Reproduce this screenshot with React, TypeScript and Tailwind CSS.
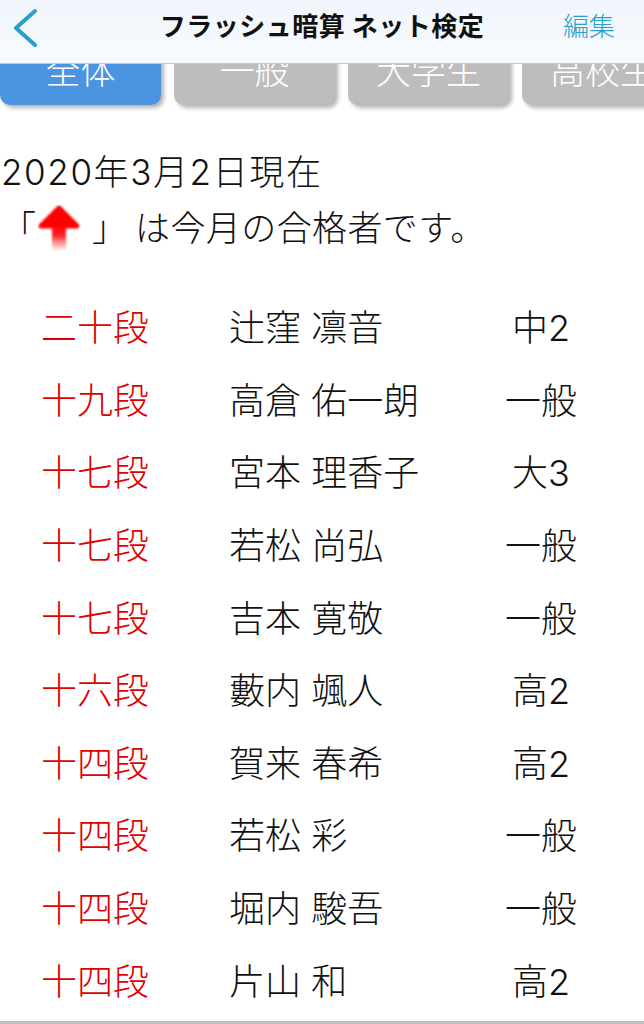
import React from 'react';

const ranks = [
    { rank: '二十段', name: '辻窪 凛音', grade: '中2' },
    { rank: '十九段', name: '高倉 佑一朗', grade: '一般' },
    { rank: '十七段', name: '宮本 理香子', grade: '大3' },
    { rank: '十七段', name: '若松 尚弘', grade: '一般' },
    { rank: '十七段', name: '吉本 寛敬', grade: '一般' },
    { rank: '十六段', name: '藪内 颯人', grade: '高2' },
    { rank: '十四段', name: '賀来 春希', grade: '高2' },
    { rank: '十四段', name: '若松 彩', grade: '一般' },
    { rank: '十四段', name: '堀内 駿吾', grade: '一般' },
    { rank: '十四段', name: '片山 和', grade: '高2' },
];

const tabs = ['全体', '一般', '大学生', '高校生'];

function UpArrow() {
    return (
        <svg width="44" height="46" viewBox="0 0 44 46" className="shrink-0 ml-[1px] mr-[11px]">
            <defs>
                <linearGradient id="shaft" x1="0" y1="0" x2="0" y2="1">
                    <stop offset="0" stopColor="#ff0000" />
                    <stop offset="0.45" stopColor="#ff2a2a" />
                    <stop offset="1" stopColor="#ff6060" stopOpacity="0.12" />
                </linearGradient>
                <filter id="soft" x="-20%" y="-20%" width="140%" height="140%">
                    <feGaussianBlur stdDeviation="0.9" />
                </filter>
            </defs>
            <g filter="url(#soft)">
                <path d="M22 3 L40 21 L4 21 Z" fill="#ff0000" stroke="#ff0000" strokeWidth="5" strokeLinejoin="round" />
                <rect x="15" y="20" width="14" height="25" fill="url(#shaft)" />
            </g>
        </svg>
    );
}

export default function App() {
    return (
        <div className="w-[644px] h-[1024px] overflow-hidden bg-white text-[#111] font-light" style={{ fontFamily: 'Inter, "Noto Sans CJK JP", "Noto Sans", sans-serif' }}>
            {/* header */}
            <div className="relative z-10 h-[64px] grid grid-cols-[1fr_auto_1fr] items-center pb-[10px] bg-gradient-to-b from-[#f1f6fc] to-[#f7fafd] border-b border-[#c5c9cd]">
                <div className="pl-[11px] flex items-center">
                    <svg width="28" height="40" viewBox="0 0 28 40">
                        <path d="M24 4 L5 21 L24 38" fill="none" stroke="#2a9fcb" strokeWidth="4" strokeLinecap="round" strokeLinejoin="round" />
                    </svg>
                </div>
                <div className="text-[26px] font-bold tracking-[0.5px] leading-none">フラッシュ暗算 ネット検定</div>
                <div className="text-right pr-[29px] text-[26px] text-[#2a9fcb] leading-none">編集</div>
            </div>

            {/* tabs */}
            <div className="h-[52px] overflow-hidden">
                <div className="flex gap-[13px] -mt-[27px]">
                    {tabs.map((t, i) => (
                        <div
                            key={t}
                            className={`shrink-0 w-[161px] h-[68px] rounded-[10px] flex items-center justify-center text-[35px] leading-none text-white shadow-[3px_3px_4px_rgba(0,0,0,0.3)] ${i === 0 ? 'bg-[#4a94e0]' : 'bg-[#bdbdbd]'}`}
                        >
                            {t}
                        </div>
                    ))}
                </div>
            </div>

            {/* notice */}
            <div className="mt-[28px] pl-[1px] text-[35px] leading-[56px]">
                <div className="tracking-[1.6px]">2020年3月2日現在</div>
                <div className="flex items-center h-[56px]">
                    <span>「</span>
                    <UpArrow />
                    <span>」</span>
                    <span className="ml-[8px] tracking-[0.4px]">は今月の合格者です。</span>
                </div>
            </div>

            {/* list */}
            <div className="mt-[36px]">
                {ranks.map((r, i) => (
                    <div key={i} className="h-[72.6px] flex items-center pl-[41px] pr-[32px] text-[36px] leading-none">
                        <div className="w-[188px] text-[#e00000]">{r.rank}</div>
                        <div className="flex-1">{r.name}</div>
                        <div className="w-[142px] text-center">{r.grade}</div>
                    </div>
                ))}
            </div>
            <div className="mt-[3px] h-[3px] bg-[#c2c2c2]" />
        </div>
    );
}
